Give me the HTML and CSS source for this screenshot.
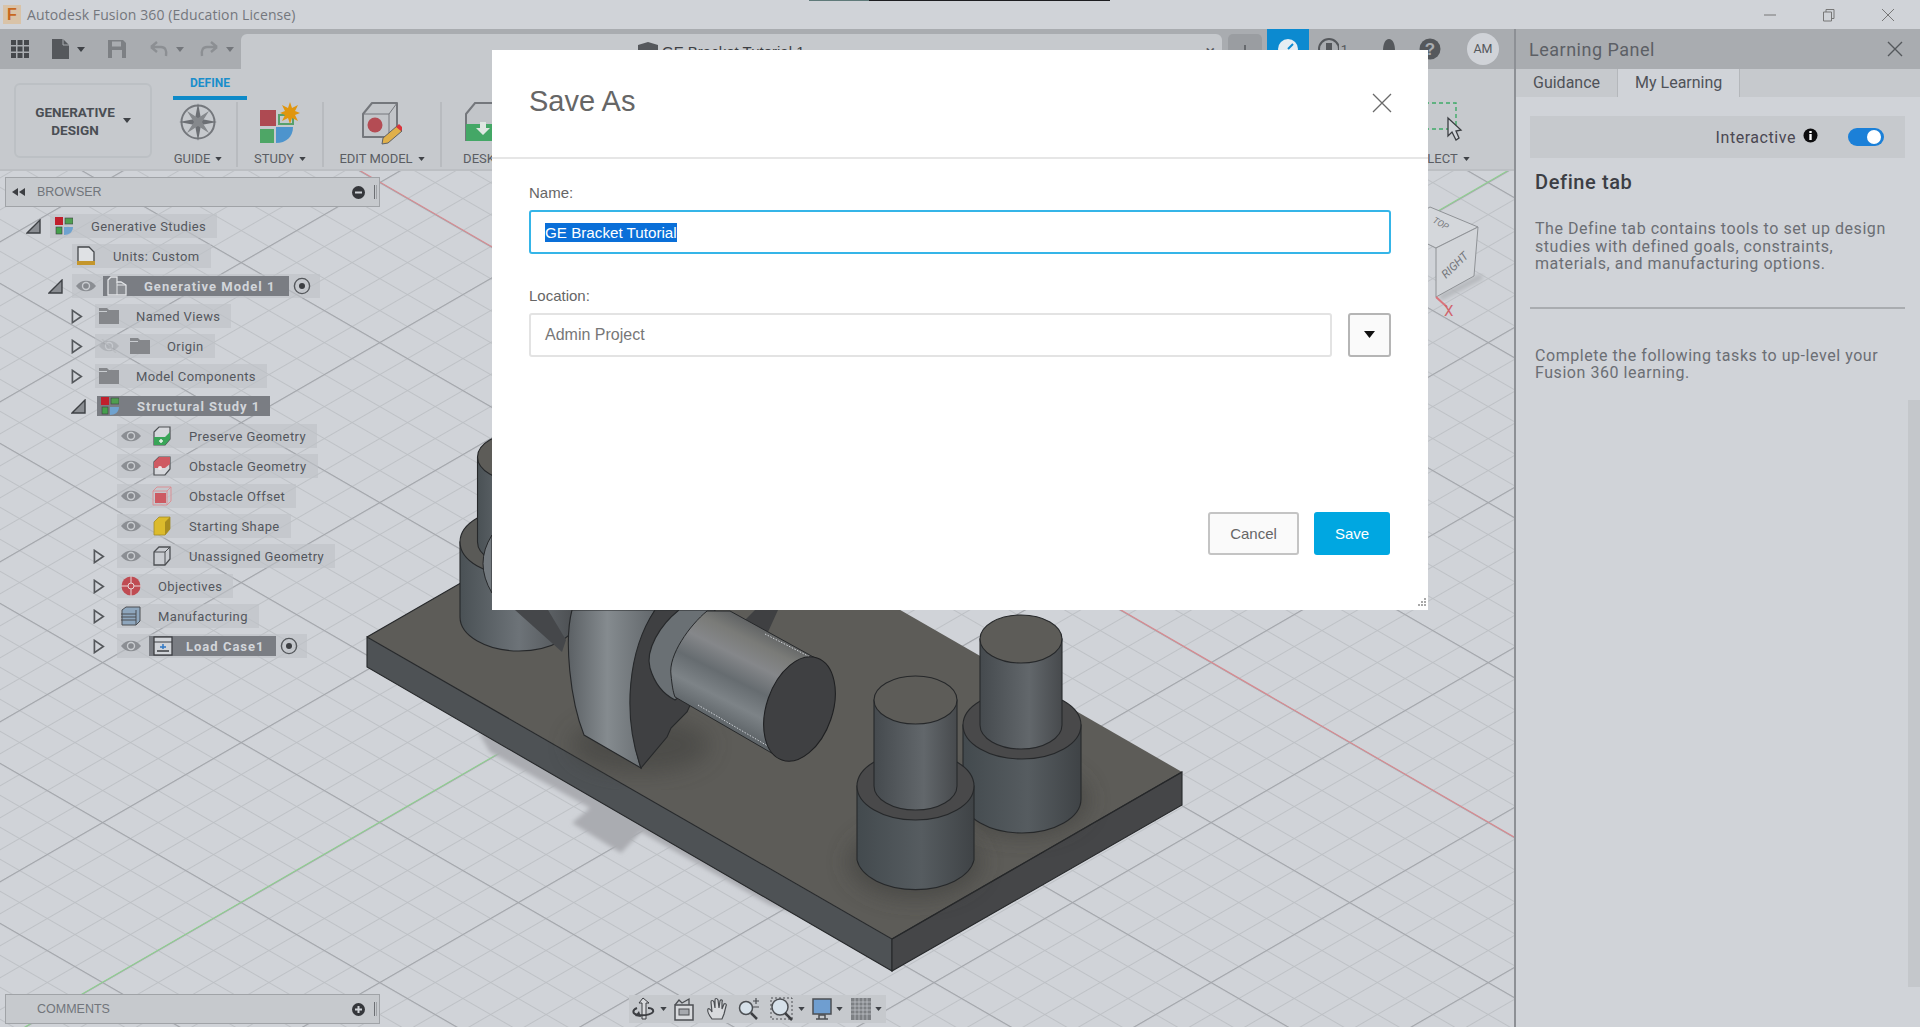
FILE: index.html
```html
<!DOCTYPE html>
<html lang="en">
<head>
  <meta charset="UTF-8" />
  <title>Autodesk Fusion 360 (Education License)</title>
  <link rel="stylesheet" href="styles.css">
</head>
<body>

  <!-- shared tree icons -->
  <svg class="sprites" width="0" height="0">
    <symbol id="eye" viewBox="0 0 20 14"><path d="M0 7C5 0 15 0 20 7C15 14 5 14 0 7Z" fill="#8b8e93"/><circle cx="10" cy="7" r="4.2" fill="#c9ccd0"/><circle cx="10" cy="7" r="2.8" fill="#85888d"/></symbol>
    <symbol id="folder" viewBox="0 0 20 16"><path d="M0 0H8L10 2H20V16H0Z" fill="#85878b"/><path d="M0 3H8V4H0Z" fill="#c9ccd0"/></symbol>
    <symbol id="twist-open" viewBox="0 0 15 15" preserveAspectRatio="xMinYMid meet"><path d="M1 14L14 1V14Z" fill="#8a8d92" stroke="#3e4145" stroke-width="1.4"/></symbol>
    <symbol id="twist-closed" viewBox="0 0 13 16" preserveAspectRatio="xMinYMid meet"><path d="M1.5 1.5L11 8L1.5 14.5Z" fill="#d0d3d8" stroke="#55585c" stroke-width="1.8"/></symbol>
    <symbol id="study" viewBox="0 0 18 18"><rect x="0" y="0" width="8" height="8" fill="#c01f2c"/><rect x="10" y="1" width="8" height="6" fill="#4f9e50" stroke="#3d3f42" stroke-width=".6"/><rect x="1" y="10" width="6" height="7" fill="#44a04c" stroke="#3d3f42" stroke-width=".6"/><path d="M9 10H18C18 15 14 18 9 18Z" fill="#6fa2cf"/></symbol>
    <symbol id="radio" viewBox="0 0 18 18"><circle cx="9" cy="9" r="7.6" fill="none" stroke="#55585c" stroke-width="1.4"/><circle cx="9" cy="9" r="3" fill="#3c3e42"/></symbol>
    <symbol id="caret" viewBox="0 0 8 5"><path d="M0 0H8L4 5Z" fill="#3f4247"/></symbol>
  </svg>

  <div class="titlebar">
    <span class="title-artifact"></span>
    <span class="app-icon">F</span>
    <span class="app-title">Autodesk Fusion 360 (Education License)</span>
    <div class="window-buttons">
      <svg width="14" height="14"><path d="M1 7H13" stroke="#777" stroke-width="1"/></svg>
      <svg width="14" height="14"><path d="M1.5 4H9.5V13H1.5ZM4 4V1.5H12V10.5H9.5" fill="none" stroke="#777" stroke-width="1"/></svg>
      <svg width="14" height="14"><path d="M1 1L13 13M13 1L1 13" stroke="#777" stroke-width="1"/></svg>
    </div>
  </div>

  <div class="workspace">
    <div class="main-column">

      <div class="qat">
        <div class="qat-left">
          <svg class="qat-grid" width="18" height="18"><g fill="#45484c"><rect width="5" height="5"/><rect x="6.5" width="5" height="5"/><rect x="13" width="5" height="5"/><rect y="6.5" width="5" height="5"/><rect x="6.5" y="6.5" width="5" height="5"/><rect x="13" y="6.5" width="5" height="5"/><rect y="13" width="5" height="5"/><rect x="6.5" y="13" width="5" height="5"/><rect x="13" y="13" width="5" height="5"/></g></svg>
          <svg class="qat-doc" width="17" height="20"><path d="M0 0H11L17 6V20H0Z" fill="#55585c"/><path d="M11 0V6H17" fill="none" stroke="#a9acb0"/></svg>
          <svg class="qat-caret" width="8" height="5"><use href="#caret"/></svg>
          <svg class="qat-save" width="18" height="18"><path d="M0 0H15L18 3V18H0Z" fill="#7d8084"/><rect x="4" y="1.5" width="9" height="5" fill="#a9acb0"/><rect x="4" y="10" width="10" height="8" fill="#a9acb0"/></svg>
          <svg class="qat-undo" width="18" height="18"><path d="M1 7L7 2M1 7L7 12M1 7H11C15 7 17 10 16 16" fill="none" stroke="#8c8f93" stroke-width="2.4"/></svg>
          <svg class="qat-caret dim" width="8" height="5"><use href="#caret"/></svg>
          <svg class="qat-redo" width="18" height="18"><path d="M17 7L11 2M17 7L11 12M17 7H7C3 7 1 10 2 16" fill="none" stroke="#8c8f93" stroke-width="2.4"/></svg>
          <svg class="qat-caret dim" width="8" height="5"><use href="#caret"/></svg>
        </div>
        <div class="doc-tab">
          <svg class="doc-icon" width="20" height="20"><path d="M0 3L10 0L20 3V20H0Z" fill="#55585c"/></svg>
          <span class="doc-name">GE Bracket Tutorial 1</span>
          <span class="doc-close">&times;</span>
        </div>
        <div class="new-tab"><svg width="14" height="14"><path d="M7 0V14M0 7H14" stroke="#66696d" stroke-width="2"/></svg></div>
        <div class="job-button"><svg width="22" height="22"><circle cx="11" cy="11" r="10" fill="#e6edf3"/><path d="M11 11L16 6" stroke="#0c8ad0" stroke-width="2"/></svg></div>
        <div class="status-icons">
          <div class="job-count"><svg width="22" height="22"><circle cx="11" cy="11" r="10" fill="none" stroke="#55585c" stroke-width="2"/><rect x="8" y="5" width="6" height="12" fill="#55585c"/></svg><span>1</span></div>
          <svg class="bell" width="16" height="20"><path d="M8 0C12 0 14 5 14 12L16 16H0L2 12C2 5 4 0 8 0Z" fill="#55585c"/></svg>
          <svg class="help" width="22" height="22"><circle cx="11" cy="11" r="10.5" fill="#55585c"/><text x="11" y="17" text-anchor="middle" font-family="Liberation Sans" font-weight="700" font-size="17" fill="#a9acb0">?</text></svg>
          <div class="avatar">AM</div>
        </div>
      </div>

      <div class="ribbon">
        <div class="mode-button"><span>GENERATIVE<br>DESIGN</span><svg width="8" height="5"><use href="#caret"/></svg></div>
        <div class="ribbon-tabbed">
          <div class="tab-strip"><span class="active-tab">DEFINE</span></div>
          <div class="tools">
            <div class="tool tool-guide">
              <svg class="tool-icon" width="40" height="44" viewBox="0 0 40 44">
                <circle cx="20" cy="20" r="16.5" fill="none" stroke="#74777c" stroke-width="2"/>
                <path d="M20 1L23 17L39 20L23 23L20 39L17 23L1 20L17 17Z" fill="#6c6f74"/>
                <path d="M9 9L20 16L31 9L24 20L31 31L20 24L9 31L16 20Z" fill="#85888c"/>
              </svg>
              <span class="tool-label">GUIDE<svg width="7" height="4"><use href="#caret"/></svg></span>
            </div>
            <div class="tool tool-study">
              <svg class="tool-icon" width="40" height="44" viewBox="0 0 40 44">
                <rect x="0" y="8" width="16" height="16" fill="#ae4a52"/>
                <rect x="19" y="13" width="14" height="9" fill="#c6c9cd" stroke="#57a06c" stroke-width="2"/>
                <rect x="0" y="27" width="14" height="14" fill="#4ea666"/>
                <path d="M16 25H33C33 35 26 41 16 41Z" fill="#4d94cd"/>
                <path d="M30 0L32 6L38 3L35 9L40 11L35 13L38 19L32 16L30 22L28 16L22 19L25 13L20 11L25 9L22 3L28 6Z" fill="#e0960e"/>
              </svg>
              <span class="tool-label">STUDY<svg width="7" height="4"><use href="#caret"/></svg></span>
            </div>
            <div class="tool tool-edit">
              <svg class="tool-icon" width="40" height="44" viewBox="0 0 40 44">
                <path d="M1 12L10 1H35V26L27 35H1Z" fill="#c2c5c9" stroke="#74777c" stroke-width="2" stroke-linejoin="round"/>
                <path d="M27 12H1M27 12L35 1M27 12V35" fill="none" stroke="#74777c" stroke-width="1"/>
                <circle cx="13" cy="23" r="7.5" fill="#b44c54"/>
                <path d="M21 36L35 24L40 29L26 41L20 42Z" fill="#e0b04a" stroke="#5e6165" stroke-width="1"/>
                <path d="M34 25L37 22L41 26L39 29Z" fill="#d8333b"/>
              </svg>
              <span class="tool-label">EDIT MODEL<svg width="7" height="4"><use href="#caret"/></svg></span>
            </div>
            <div class="tool tool-desk">
              <svg class="tool-icon" width="40" height="44" viewBox="0 0 40 44">
                <path d="M1 12L10 1H36V38H1Z" fill="#c2c5c9" stroke="#74777c" stroke-width="2"/>
                <rect x="1" y="22" width="35" height="17" fill="#44a766"/>
                <path d="M15 20H21V26H25L18 33L11 26H15Z" fill="#dfe7e2"/>
              </svg>
              <span class="tool-label">DESK<svg width="7" height="4"><use href="#caret"/></svg></span>
            </div>
          </div>
        </div>
        <div class="tool tool-select">
          <svg class="tool-icon" width="60" height="44" viewBox="0 0 60 44">
            <path d="M0 1H45V27H0" fill="none" stroke="#3faa68" stroke-width="1.4" stroke-dasharray="4 3"/>
            <path d="M37 16V34L41 30L45 38L48 36L45 29L50 28Z" fill="#d0d3d8" stroke="#3a3d41" stroke-width="1.3"/>
          </svg>
          <span class="tool-label">SELECT<svg width="7" height="4"><use href="#caret"/></svg></span>
        </div>
      </div>

      <div class="viewport">
        <svg class="scene" width="1514" height="856" viewBox="0 171 1514 856">
          <defs>
            <pattern id="gridDownMinor" width="100" height="27.71" patternUnits="userSpaceOnUse" patternTransform="translate(934 502) rotate(30)"><rect y="0" width="100" height=".9" fill="#bcbfc4"/></pattern>
            <pattern id="gridUpMinor" width="100" height="27.71" patternUnits="userSpaceOnUse" patternTransform="translate(934 502) rotate(-30)"><rect y="0" width="100" height=".9" fill="#bcbfc4"/></pattern>
            <pattern id="gridDownMajor" width="100" height="138.56" patternUnits="userSpaceOnUse" patternTransform="translate(934 502) rotate(30)"><rect y="0" width="100" height="1.1" fill="#a3a6ab"/></pattern>
            <pattern id="gridUpMajor" width="100" height="138.56" patternUnits="userSpaceOnUse" patternTransform="translate(934 502) rotate(-30)"><rect y="0" width="100" height="1.1" fill="#a3a6ab"/></pattern>
            <linearGradient id="cylBig" x1="0" x2="1" y1="0" y2="0"><stop offset="0" stop-color="#434a4e"/><stop offset=".55" stop-color="#565c60"/><stop offset="1" stop-color="#3f4346"/></linearGradient>
            <linearGradient id="cylPost" x1="0" x2="1" y1="0" y2="0"><stop offset="0" stop-color="#454a4e"/><stop offset=".6" stop-color="#62676b"/><stop offset="1" stop-color="#474a4d"/></linearGradient>
            <linearGradient id="cylBack" x1="0" x2="1" y1="0" y2="0"><stop offset="0" stop-color="#4a5155"/><stop offset=".5" stop-color="#6d7378"/><stop offset="1" stop-color="#4a4d50"/></linearGradient>
            <linearGradient id="armFill" x1="0" x2="1" y1="0" y2="0"><stop offset="0" stop-color="#5c6165"/><stop offset=".45" stop-color="#858b8f"/><stop offset="1" stop-color="#62676b"/></linearGradient>
            <linearGradient id="shaft" gradientUnits="userSpaceOnUse" x1="775" y1="625" x2="725" y2="725"><stop offset="0" stop-color="#55585b"/><stop offset=".22" stop-color="#7a7b78"/><stop offset=".4" stop-color="#85878a"/><stop offset=".6" stop-color="#666c70"/><stop offset=".8" stop-color="#7d8387"/><stop offset="1" stop-color="#5f6569"/></linearGradient>
            <filter id="soft"><feGaussianBlur stdDeviation="2"/></filter>
            <filter id="occlusion" x="-30%" y="-30%" width="160%" height="160%"><feGaussianBlur stdDeviation="11"/></filter>
          </defs>
          <rect x="0" y="171" width="1514" height="856" fill="#d0d3d8"/>
          <rect x="0" y="171" width="1514" height="856" fill="url(#gridDownMinor)"/>
          <rect x="0" y="171" width="1514" height="856" fill="url(#gridUpMinor)"/>
          <rect x="0" y="171" width="1514" height="856" fill="url(#gridDownMajor)"/>
          <rect x="0" y="171" width="1514" height="856" fill="url(#gridUpMajor)"/>
          <path d="M360 170.6L1514 837" stroke="#d98a90" stroke-width="1.1"/>
          <path d="M0 1041.4L1514 167" stroke="#8fd08f" stroke-width="1.1"/>

          <polygon points="478,732 490,752 590,808 572,823 621,853 641,832 770,905 800,915 700,800" fill="#aaacb1" filter="url(#soft)"/>

          <polygon points="367,637 657,470 1182,772 892,939" fill="#5d5c58"/>
          <polygon points="367,637 892,939 892,971 367,667" fill="#4e5255" stroke="#26282a" stroke-width="1.1"/>
          <polygon points="892,939 1182,772 1182,805 892,971" fill="#454648" stroke="#26282a" stroke-width="1.1"/>
          <path d="M367 637L657 470M892 939L1182 772" stroke="#26282a" stroke-width="1.2"/>

          <ellipse cx="915" cy="862" rx="66" ry="36" fill="#3c3c3a" opacity=".6" filter="url(#occlusion)"/>
          <ellipse cx="1022" cy="800" rx="66" ry="36" fill="#3c3c3a" opacity=".6" filter="url(#occlusion)"/>
          <ellipse cx="640" cy="745" rx="70" ry="28" fill="#3c3c3a" opacity=".5" filter="url(#occlusion)"/>

          <path d="M460 542V617A59 34 0 0 0 578 617V542Z" fill="url(#cylBack)" stroke="#26282a" stroke-width="1.1"/>
          <ellipse cx="519" cy="542" rx="59" ry="34" fill="#5a5a57" stroke="#26282a" stroke-width="1.1"/>
          <path d="M477.500 457V542A41.500 24 0 0 0 560.500 542V457Z" fill="url(#cylBack)" stroke="#26282a" stroke-width="1.1"/>
          <ellipse cx="519" cy="457" rx="41.500" ry="24" fill="#5d5c58" stroke="#26282a" stroke-width="1.1"/>
          <path d="M492 535Q474 563 492 593Z" fill="#73797e" stroke="#26282a" stroke-width="1"/>
          <polygon points="515,610 548,610 566,640 562,652" fill="#45474a"/>

          <path d="M572 610C564 640 570 700 584 735L641 768C625 720 630 650 655 610Z" fill="url(#armFill)" stroke="#26282a" stroke-width="1.1"/>
          <path d="M655 610C628 650 622 715 641 768L667 737L671 728L687 712L720 640L700 610Z" fill="#3f4042" stroke="#26282a" stroke-width="1.1"/>
          <polygon points="755,610 778,610 768,632 745,620" fill="#3f4042"/>
          <path d="M679 610C660 625 645 650 650 668C655 685 665 695 675 700L700 680L715 610Z" fill="#6a7074" stroke="#26282a" stroke-width="1.1"/>
          <path d="M707 611C690 625 668 655 671 675C672 685 673 692 675 697L782 759L817 659L730 611Z" fill="url(#shaft)" stroke="#26282a" stroke-width="1"/>
          <path d="M765 634L812 658M698 705L778 752" stroke="#d0d3d8" stroke-width="1" stroke-dasharray="1.500 1.500"/>
          <ellipse cx="799.500" cy="709" rx="33" ry="54" transform="rotate(19 799.500 709)" fill="#3f4042" stroke="#1f2022" stroke-width="1.1"/>

          <path d="M963 725V799A59 34 0 0 0 1081 799V725Z" fill="url(#cylBig)" stroke="#26282a" stroke-width="1.1"/>
          <ellipse cx="1022" cy="725" rx="59" ry="34" fill="#49494a" stroke="#26282a" stroke-width="1.1"/>
          <path d="M980 639V725A41 24 0 0 0 1062 725V639Z" fill="url(#cylPost)" stroke="#26282a" stroke-width="1.1"/>
          <ellipse cx="1021" cy="639" rx="41" ry="24" fill="#5d5c58" stroke="#26282a" stroke-width="1.1"/>

          <path d="M857 786V860A59 34 0 0 0 974 860V786Z" fill="url(#cylBig)" stroke="#26282a" stroke-width="1.1"/>
          <ellipse cx="915.500" cy="786" rx="58.500" ry="34" fill="#49494a" stroke="#26282a" stroke-width="1.1"/>
          <path d="M874 700V786A41.500 24 0 0 0 957 786V700Z" fill="url(#cylPost)" stroke="#26282a" stroke-width="1.1"/>
          <ellipse cx="915.500" cy="700" rx="41.500" ry="24" fill="#5d5c58" stroke="#26282a" stroke-width="1.1"/>

          <path d="M1440 298L1482 276" stroke="#b5b8bc" stroke-width="6" filter="url(#soft)"/>
          <polygon points="1430,207 1478,227 1436,248 1395,228" fill="#d4d7db" stroke="#8f9296"/>
          <polygon points="1436,248 1478,227 1474,276 1436,297" fill="#d2d5d9" stroke="#8f9296"/>
          <text class="cube-text" transform="translate(1432 222) rotate(30)" font-size="9">TOP</text>
          <text class="cube-text" transform="translate(1446 279) rotate(-44)" font-size="11.500">RIGHT</text>
          <path d="M1436 297L1447 307" stroke="#d9757c" stroke-width="2"/>
          <text x="1444" y="316" font-family="Roboto" font-size="15" fill="#d0656c">X</text>
        </svg>

        <div class="browser-panel">
          <div class="panel-bar">
            <svg class="rewind" width="13" height="8"><path d="M6 0V8L0 4ZM13 0V8L7 4Z" fill="#3c3e42"/></svg>
            <span class="panel-title">BROWSER</span>
            <svg class="round-btn" width="13" height="13"><circle cx="6.500" cy="6.500" r="6.500" fill="#35373b"/><rect x="3" y="5.500" width="7" height="2" fill="#d0d3d8"/></svg>
            <span class="grip"></span>
          </div>
        </div>

        <div class="tree">
          <div class="tree-row depth-0">
            <svg class="twist"><use href="#twist-open"/></svg>
            <div class="node"><svg class="node-icon"><use href="#study" x="1" y="1" width="18" height="18"/></svg><span class="node-text">Generative Studies</span></div>
          </div>
          <div class="tree-row depth-1">
            <span class="twist"></span>
            <div class="node">
              <svg class="node-icon" viewBox="0 0 20 20"><path d="M2 1H13L18 6V16H2Z" fill="#dfe1e4" stroke="#44474b" stroke-width="1.3"/><rect x="1" y="15" width="18" height="4" fill="#c4962c"/></svg>
              <span class="node-text">Units: Custom</span>
            </div>
          </div>
          <div class="tree-row depth-1">
            <svg class="twist"><use href="#twist-open"/></svg>
            <div class="node has-radio">
              <svg class="eye"><use href="#eye"/></svg>
              <div class="selected sel-model">
                <svg class="node-icon" viewBox="0 0 20 20"><path d="M1 4L4 1H10V6H14L19 9V19H1Z" fill="#8a8d92" stroke="#e2e4e7" stroke-width="1.3"/><path d="M10 6V19M10 9H19" stroke="#e2e4e7"/></svg>
                <span class="node-text">Generative Model 1</span>
              </div>
              <svg class="radio"><use href="#radio"/></svg>
            </div>
          </div>
          <div class="tree-row depth-2">
            <svg class="twist"><use href="#twist-closed"/></svg>
            <div class="node"><svg class="node-icon"><use href="#folder"/></svg><span class="node-text">Named Views</span></div>
          </div>
          <div class="tree-row depth-2">
            <svg class="twist"><use href="#twist-closed"/></svg>
            <div class="node">
              <svg class="eye off" viewBox="0 0 20 14"><use href="#eye"/><path d="M3 0L17 14" stroke="#a9acb0" stroke-width="1.500"/></svg>
              <svg class="node-icon"><use href="#folder"/></svg><span class="node-text">Origin</span>
            </div>
          </div>
          <div class="tree-row depth-2">
            <svg class="twist"><use href="#twist-closed"/></svg>
            <div class="node"><svg class="node-icon"><use href="#folder"/></svg><span class="node-text">Model Components</span></div>
          </div>
          <div class="tree-row depth-2">
            <svg class="twist"><use href="#twist-open"/></svg>
            <div class="node node-bare">
              <div class="selected sel-study"><svg class="node-icon"><use href="#study" x="1" y="1" width="18" height="18"/></svg><span class="node-text">Structural Study 1</span></div>
            </div>
          </div>
          <div class="tree-row depth-3">
            <span class="twist"></span>
            <div class="node wide">
              <svg class="eye"><use href="#eye"/></svg>
              <svg class="node-icon" viewBox="0 0 20 20"><path d="M2 6L7 1H18V13L13 19H2Z" fill="#d6d8dc" stroke="#4c4f53" stroke-width="1.2"/><path d="M2 11H13L18 6V13L13 19H2Z" fill="#39a558"/><path d="M7 15H11M9 13V17" stroke="#e8f3ea" stroke-width="1.500"/></svg>
              <span class="node-text">Preserve Geometry</span>
            </div>
          </div>
          <div class="tree-row depth-3">
            <span class="twist"></span>
            <div class="node wide">
              <svg class="eye"><use href="#eye"/></svg>
              <svg class="node-icon" viewBox="0 0 20 20"><path d="M2 6L7 1H18V13L13 19H2Z" fill="#d6d8dc" stroke="#4c4f53" stroke-width="1.2"/><path d="M2 6L7 1H18L18 8L13 12H2Z" fill="#cf5a62"/><circle cx="8" cy="12" r="2" fill="#f0e2e3"/></svg>
              <span class="node-text">Obstacle Geometry</span>
            </div>
          </div>
          <div class="tree-row depth-3">
            <span class="twist"></span>
            <div class="node">
              <svg class="eye"><use href="#eye"/></svg>
              <svg class="node-icon" viewBox="0 0 20 20"><path d="M1 5L5 1H19V15L15 19H1ZM1 5H15V19M15 5L19 1" fill="none" stroke="#dc8a90" stroke-width=".9"/><rect x="3" y="7" width="11" height="10" fill="#cc5a62"/></svg>
              <span class="node-text">Obstacle Offset</span>
            </div>
          </div>
          <div class="tree-row depth-3">
            <span class="twist"></span>
            <div class="node">
              <svg class="eye"><use href="#eye"/></svg>
              <svg class="node-icon" viewBox="0 0 20 20"><path d="M2 6L7 1H18V13L13 19H2Z" fill="#dcbb2c" stroke="#a18a2a" stroke-width=".8"/><path d="M13 6L18 1V13L13 19Z" fill="#a88c1f"/></svg>
              <span class="node-text">Starting Shape</span>
            </div>
          </div>
          <div class="tree-row depth-3">
            <svg class="twist"><use href="#twist-closed"/></svg>
            <div class="node wide">
              <svg class="eye"><use href="#eye"/></svg>
              <svg class="node-icon" viewBox="0 0 20 20"><path d="M2 6L7 1H18V13L13 19H2Z" fill="#c9ccd1" stroke="#4c4f53" stroke-width="1.300"/><path d="M2 6H13L18 1M13 6V19" fill="none" stroke="#4c4f53"/></svg>
              <span class="node-text">Unassigned Geometry</span>
            </div>
          </div>
          <div class="tree-row depth-3">
            <svg class="twist"><use href="#twist-closed"/></svg>
            <div class="node">
              <svg class="node-icon" viewBox="0 0 20 20"><circle cx="10" cy="10" r="9.500" fill="#bf4b52"/><circle cx="10" cy="10" r="3" fill="#bf4b52" stroke="#e7d8d9"/><path d="M0 10H7M13 10H20M10 0V7M10 13V20" stroke="#e7d8d9"/></svg>
              <span class="node-text">Objectives</span>
            </div>
          </div>
          <div class="tree-row depth-3">
            <svg class="twist"><use href="#twist-closed"/></svg>
            <div class="node">
              <svg class="node-icon" viewBox="0 0 20 20"><path d="M1 4L5 1H19V15L15 19H1Z" fill="#8ea6bd" stroke="#4c4f53"/><path d="M0 8H15M0 11H15M0 14H15" stroke="#4c4f53"/><path d="M15 4V19" stroke="#4c4f53"/></svg>
              <span class="node-text">Manufacturing</span>
            </div>
          </div>
          <div class="tree-row depth-3">
            <svg class="twist"><use href="#twist-closed"/></svg>
            <div class="node has-radio">
              <svg class="eye"><use href="#eye"/></svg>
              <div class="selected sel-load">
                <svg class="node-icon" viewBox="0 0 20 20"><rect x="1" y="1" width="18" height="18" fill="#d0d3d8" stroke="#3c3e42" stroke-width="1.300"/><path d="M1 6H19" stroke="#3c3e42"/><path d="M10 8V13M7 11H13" stroke="#2f77c4" stroke-width="1.500"/><path d="M4 15H16" stroke="#3c3e42" stroke-width="1.500"/></svg>
                <span class="node-text">Load Case1</span>
              </div>
              <svg class="radio"><use href="#radio"/></svg>
            </div>
          </div>
        </div>

        <div class="viewport-footer">
          <div class="comments-panel">
            <div class="panel-bar">
              <span class="panel-title no-rewind">COMMENTS</span>
              <svg class="round-btn" width="13" height="13"><circle cx="6.500" cy="6.500" r="6.500" fill="#35373b"/><path d="M3 6.500H10M6.500 3V10" stroke="#d0d3d8" stroke-width="2"/></svg>
              <span class="grip"></span>
            </div>
          </div>
          <div class="nav-bar">
            <svg width="24" height="24" viewBox="0 0 24 24"><path d="M11 1L7 6H10V22H14V6H17Z" fill="#d8dadd" stroke="#3c3e42"/><path d="M5 11C0 13 0 17 6 18C13 19 23 17 21 13C20 11 18 11 16 11" fill="none" stroke="#3c3e42" stroke-width="2"/><path d="M7 14L3 19L9 20Z" fill="#3c3e42"/></svg>
            <svg class="nav-caret" width="7" height="4"><use href="#caret"/></svg>
            <svg class="nav-look" width="22" height="24" viewBox="0 0 22 24"><path d="M2 8H20V23H2Z" fill="#d8dadd" stroke="#4c4f53" stroke-width="1.500"/><path d="M2 8L6 3L9 6L16 2V8" fill="none" stroke="#4c4f53" stroke-width="1.300"/><rect x="6" y="12" width="10" height="6" fill="#a6a9ae" stroke="#4c4f53"/></svg>
            <svg class="nav-hand" width="22" height="24" viewBox="0 0 22 24"><path d="M6 22C3 18 1 14 2 12C3 11 5 13 6 15L5 5C5 3 7 3 8 5L9 11L9 3C9 1 11 1 12 3L13 11L14 4C15 2 17 3 16 5L16 12L18 7C19 6 21 7 20 9L18 17L16 22Z" fill="#d8dadd" stroke="#4c4f53" stroke-width="1.200"/></svg>
            <svg class="nav-zoom" width="22" height="24" viewBox="0 0 22 24"><circle cx="8" cy="11" r="6.500" fill="#d6e1ea" stroke="#4c4f53" stroke-width="1.500"/><path d="M13 16L19 22" stroke="#3c3e42" stroke-width="2.500"/><path d="M15 4H21M18 1V7M15 10H21" stroke="#4c4f53" stroke-width="1.200"/></svg>
            <svg class="nav-fit" width="24" height="24" viewBox="0 0 24 24"><rect x="1" y="1" width="21" height="21" fill="none" stroke="#4c4f53" stroke-dasharray="2 2"/><circle cx="10" cy="10" r="8" fill="#d6e1ea" stroke="#4c4f53" stroke-width="1.500"/><path d="M15 16L22 23" stroke="#3c3e42" stroke-width="2.500"/></svg>
            <svg class="nav-caret" width="7" height="4"><use href="#caret"/></svg>
            <svg class="nav-display" width="20" height="24" viewBox="0 0 20 24"><rect x="1" y="2" width="18" height="15" fill="#6f9ed0" stroke="#4c4f53" stroke-width="1.500"/><path d="M7 18H13V22H7ZM4 22H16" fill="none" stroke="#4c4f53" stroke-width="1.500"/></svg>
            <svg class="nav-caret" width="7" height="4"><use href="#caret"/></svg>
            <svg class="nav-grid" width="20" height="22" viewBox="0 0 20 22"><rect width="20" height="22" fill="#7d8084"/><path d="M4 0V22M8 0V22M12 0V22M16 0V22M0 4H20M0 8H20M0 12H20M0 16H20" stroke="#c6c9cd" stroke-width=".7"/></svg>
            <svg class="nav-caret" width="7" height="4"><use href="#caret"/></svg>
          </div>
        </div>
      </div>
    </div>

    <aside class="learning-panel">
      <div class="learning-header">
        <span>Learning Panel</span>
        <svg width="16" height="16"><path d="M1 1L15 15M15 1L1 15" stroke="#55585c" stroke-width="1.400"/></svg>
      </div>
      <div class="learning-tabs">
        <span class="learning-tab">Guidance</span>
        <span class="learning-tab current">My Learning</span>
      </div>
      <div class="learning-body">
        <div class="interactive-bar">
          <span>Interactive</span>
          <svg class="info" width="15" height="15"><circle cx="7.500" cy="7.500" r="7" fill="#0d0d0f"/><rect x="6.300" y="6" width="2.400" height="6" fill="#fff"/><rect x="6.300" y="3" width="2.400" height="2" fill="#fff"/></svg>
          <span class="toggle"><i></i></span>
        </div>
        <h2>Define tab</h2>
        <p class="lesson-text">The Define tab contains tools to set up design studies with defined goals, constraints, materials, and manufacturing options.</p>
        <hr class="lesson-rule">
        <p class="lesson-text">Complete the following tasks to up-level your Fusion 360 learning.</p>
      </div>
      <div class="panel-scrollbar"></div>
    </aside>
  </div>

  <div class="dialog">
    <div class="dialog-header">
      <h1>Save As</h1>
      <svg width="20" height="20"><path d="M1 1L19 19M19 1L1 19" stroke="#6a6a6a" stroke-width="1.300"/></svg>
    </div>
    <div class="dialog-body">
      <div class="field-label first">Name:</div>
      <div class="text-field focused"><span class="selection">GE Bracket Tutorial</span></div>
      <div class="field-label">Location:</div>
      <div class="location-row">
        <div class="text-field location-value">Admin Project</div>
        <div class="drop-button"><svg width="11" height="7"><path d="M0 0H11L5.500 7Z" fill="#111"/></svg></div>
      </div>
    </div>
    <div class="dialog-footer">
      <button class="btn btn-cancel">Cancel</button>
      <button class="btn btn-save">Save</button>
    </div>
    <svg class="resize-grip" width="8" height="8"><g fill="#a9a9a9"><rect x="6" y="0" width="2" height="2"/><rect x="3" y="3" width="2" height="2"/><rect x="6" y="3" width="2" height="2"/><rect x="0" y="6" width="2" height="2"/><rect x="3" y="6" width="2" height="2"/><rect x="6" y="6" width="2" height="2"/></g></svg>
  </div>

</body>
</html>
```

FILE: styles.css
```css
* {
  box-sizing: border-box;
}

html, body {
  margin: 0;
  height: 100%;
}

body {
  position: relative;
  width: 1920px;
  height: 1027px;
  overflow: hidden;
  display: flex;
  flex-direction: column;
  background-color: #d0d3d8;
  font-family: 'Roboto', sans-serif;
  color: #55585c;
}

.sprites {
  position: absolute;
}

/* title bar */
.titlebar {
  position: relative;
  height: 29px;
  flex: none;
  display: flex;
  align-items: center;
  padding-left: 3px;
  background-color: #d0d3d8;
}

.title-artifact {
  position: absolute;
  left: 809px;
  top: 0;
  width: 301px;
  height: 1px;
  background: linear-gradient(to right, #5f7a7a 20%, #1c1d20 20%);
}

.app-icon {
  width: 18px;
  height: 19px;
  background-color: #d9c3a8;
  color: #c8681e;
  font: 700 16px/19px 'Liberation Sans', sans-serif;
  text-align: center;
}

.app-title {
  margin-left: 6px;
  font: 14px 'Open Sans', sans-serif;
  letter-spacing: 0.1px;
  color: #74777d;
}

.window-buttons {
  margin-left: auto;
  margin-right: 25px;
  display: flex;
  gap: 45px;
}

/* main layout */
.workspace {
  flex: 1;
  display: flex;
  min-height: 0;
}

.main-column {
  width: 1514px;
  flex: none;
  display: flex;
  flex-direction: column;
}

/* quick access row */
.qat {
  height: 40px;
  flex: none;
  display: flex;
  background-color: #a9acb0;
}

.qat-left {
  width: 241px;
  flex: none;
  display: flex;
  align-items: center;
  padding-left: 11px;
}

.qat-left svg {
  flex: none;
}

.qat-doc { margin-left: 23px; }
.qat-caret { margin-left: 8px; }
.qat-caret.dim { opacity: 0.5; margin-left: 8px; }
.qat-save { margin-left: 23px; }
.qat-undo { margin-left: 24px; }
.qat-redo { margin-left: 16px; }

.doc-tab {
  width: 981px;
  flex: none;
  margin-top: 5px;
  display: flex;
  align-items: center;
  padding-left: 397px;
  background-color: #c6c9cd;
  border-radius: 6px 6px 0 0;
}

.doc-name {
  margin-left: 4px;
  font: 15px 'Liberation Sans', sans-serif;
  color: #3c3e42;
}

.doc-close {
  margin-left: auto;
  margin-right: 7px;
  font-size: 18px;
}

.new-tab {
  width: 34px;
  margin: 5px 0 0 6px;
  flex: none;
  display: flex;
  align-items: center;
  justify-content: center;
  background-color: #9a9da1;
  border-radius: 5px 5px 0 0;
}

.job-button {
  width: 42px;
  margin-left: 5px;
  flex: none;
  display: flex;
  align-items: center;
  justify-content: center;
  background-color: #0c8ad0;
}

.status-icons {
  flex: 1;
  display: flex;
  align-items: center;
  padding-left: 9px;
}

.job-count {
  display: flex;
  align-items: center;
  gap: 2px;
  width: 30px;
  font-size: 13px;
}

.bell { margin-left: 33px; }
.help { margin-left: 22px; }

.avatar {
  width: 32px;
  height: 32px;
  margin-left: 26px;
  border-radius: 50%;
  background-color: #d0d3d8;
  text-align: center;
  font-size: 12.5px;
  line-height: 32px;
}

/* ribbon */
.ribbon {
  height: 102px;
  flex: none;
  display: flex;
  padding: 0 43px 0 14px;
  background-color: #c6c9cd;
  border-bottom: 2px solid #bcbfc3;
}

.mode-button {
  width: 138px;
  height: 75px;
  margin-top: 14px;
  flex: none;
  display: flex;
  align-items: center;
  justify-content: center;
  gap: 8px;
  border: 2px solid #bcc0c4;
  border-radius: 6px;
  font-size: 13.5px;
  font-weight: 700;
  line-height: 18px;
  text-align: center;
  color: #4a4e54;
}

.ribbon-tabbed {
  margin-left: 14px;
}

.tab-strip {
  height: 31px;
  padding-left: 7px;
}

.active-tab {
  display: block;
  width: 74px;
  height: 31px;
  padding-top: 7px;
  border-bottom: 4px solid #0e8ac8;
  text-align: center;
  font-size: 12px;
  font-weight: 700;
  color: #1a8ecb;
}

.tools {
  display: flex;
  margin-top: 2px;
}

.tool {
  height: 65px;
  display: flex;
  flex-direction: column;
  align-items: center;
  justify-content: space-between;
  border-right: 2px solid #b8bbbf;
}

.tool-guide { width: 72px; padding-right: 6px; }
.tool-study { width: 86px; }
.tool-edit { width: 118px; }
.tool-desk { width: 86px; border-right: none; }

.tool-select {
  width: 60px;
  margin: 33px 0 0 auto;
  border-right: none;
}

.tool-icon {
  flex: none;
}

.tool-label {
  display: flex;
  align-items: center;
  gap: 5px;
  font-size: 13px;
  line-height: 16px;
  white-space: nowrap;
  color: #5a5d63;
}

/* viewport */
.viewport {
  position: relative;
  flex: 1;
  display: flex;
  flex-direction: column;
  padding: 6px 0 3px 5px;
  overflow: hidden;
}

.scene {
  position: absolute;
  left: 0;
  top: 0;
}

.cube-text {
  font-family: 'Roboto', sans-serif;
  font-style: italic;
  fill: #74777c;
}

.browser-panel,
.comments-panel,
.tree,
.viewport-footer {
  position: relative;
}

.browser-panel,
.comments-panel {
  width: 375px;
  flex: none;
}

.panel-bar {
  height: 30px;
  display: flex;
  align-items: center;
  padding-left: 6px;
  background-color: #c6c9cd;
  border: 1px solid #a0a3a7;
}

.rewind {
  flex: none;
}

.panel-title {
  margin-left: 12px;
  font: 12.5px 'Liberation Sans', sans-serif;
  color: #71757b;
}

.panel-title.no-rewind {
  margin-left: 25px;
}

.round-btn {
  margin-left: auto;
}

.grip {
  width: 3px;
  height: 14px;
  margin: 0 2px 0 9px;
  border-left: 1px solid #6c6f73;
  border-right: 1px solid #a0a3a7;
}

/* browser tree */
.tree {
  margin-top: 7px;
  display: flex;
  flex-direction: column;
  gap: 6px;
}

.tree-row {
  display: flex;
  align-items: center;
  height: 24px;
}

.depth-0 { margin-left: 21px; }
.depth-1 { margin-left: 43px; }
.depth-2 { margin-left: 66px; }
.depth-3 { margin-left: 88px; }

.twist {
  width: 24px;
  height: 15px;
  flex: none;
  display: block;
}

.node {
  height: 24px;
  display: flex;
  align-items: center;
  padding: 0 11px 0 4px;
  background-color: rgba(190, 194, 199, 0.6);
}

.node-bare {
  padding: 0 0 0 2px;
  background: none;
}

.node-icon {
  width: 20px;
  height: 20px;
  flex: none;
}

.node-text {
  margin-left: 17px;
  font: 13px 'Roboto', sans-serif;
  letter-spacing: 0.4px;
  white-space: nowrap;
  color: #54575d;
}

.eye {
  width: 20px;
  height: 14px;
  flex: none;
  margin-right: 11px;
}

.eye.off {
  opacity: 0.35;
}

.selected {
  height: 20px;
  display: flex;
  align-items: center;
  background-color: #7a7d83;
}

.selected .node-text {
  font-weight: 700;
  letter-spacing: 1px;
  color: #d2d5da;
}

.sel-model {
  margin-left: -4px;
  padding: 0 14px 0 4px;
}

.sel-study {
  padding: 0 10px 0 3px;
}

.sel-load {
  margin-left: -3px;
  padding: 0 11px 0 4px;
}

.sel-load .node-text {
  margin-left: 13px;
}

.radio {
  width: 18px;
  height: 18px;
  flex: none;
  margin-left: 4px;
}

.has-radio {
  padding-right: 9px;
}

/* bottom of viewport */
.viewport-footer {
  margin-top: auto;
  display: flex;
  align-items: center;
}

.nav-bar {
  height: 28px;
  margin-left: 249px;
  display: flex;
  align-items: center;
  padding: 0 4px 0 3px;
  background-color: #c6c9cd;
}

.nav-bar svg {
  flex: none;
}

.nav-caret { margin-left: 4px; }
.nav-look { margin-left: 6px; }
.nav-hand { margin-left: 11px; }
.nav-zoom { margin-left: 10px; }
.nav-fit { margin-left: 10px; }
.nav-display { margin-left: 7px; }
.nav-grid { margin-left: 8px; }

/* learning panel */
.learning-panel {
  position: relative;
  flex: 1;
  display: flex;
  flex-direction: column;
  border-left: 2px solid #8d9095;
  background-color: #d0d3d8;
}

.learning-header {
  height: 40px;
  flex: none;
  display: flex;
  align-items: center;
  justify-content: space-between;
  padding: 0 17px 0 13px;
  background-color: #a9acb0;
  font-size: 18px;
  letter-spacing: 0.5px;
  color: #5c5f65;
}

.learning-tabs {
  height: 28px;
  flex: none;
  display: flex;
  background-color: #c6c9cd;
}

.learning-tab {
  padding: 0 17px;
  font-size: 16px;
  line-height: 28px;
  color: #4f5258;
}

.learning-tab.current {
  background-color: #d0d3d8;
  border-left: 1px solid #b4b7bb;
  border-right: 1px solid #b4b7bb;
  margin-left: 0;
}

.learning-body {
  padding: 19px 15px 0 14px;
}

.interactive-bar {
  height: 42px;
  display: flex;
  align-items: center;
  justify-content: flex-end;
  padding-right: 21px;
  background-color: #c6c9cd;
  font-size: 16px;
  letter-spacing: 0.55px;
  color: #4a4752;
}

.info {
  margin-left: 7px;
  margin-bottom: 3px;
}

.toggle {
  width: 36px;
  height: 18px;
  margin-left: 30px;
  padding: 2px 3px 2px 0;
  display: flex;
  justify-content: flex-end;
  border-radius: 9px;
  background-color: #1b80d8;
}

.toggle i {
  width: 14px;
  height: 14px;
  border-radius: 50%;
  background-color: #fff;
}

.learning-body h2 {
  margin: 12px 0 0 5px;
  font-size: 20px;
  font-weight: 500;
  letter-spacing: 0.6px;
  line-height: 24px;
  color: #3c3e44;
}

.lesson-text {
  margin: 0 0 0 5px;
  font-size: 16px;
  letter-spacing: 0.55px;
  line-height: 17.5px;
  color: #6b6e74;
}

.learning-body h2 + .lesson-text {
  margin-top: 26px;
}

.lesson-rule {
  margin: 34px 0 38px;
  border: none;
  border-top: 2px solid #a9acb0;
}

.panel-scrollbar {
  position: absolute;
  right: 0;
  top: 371px;
  width: 12px;
  height: 587px;
  background-color: #c4c7cb;
}

/* save dialog */
.dialog {
  position: absolute;
  left: 492px;
  top: 50px;
  width: 936px;
  height: 560px;
  display: flex;
  flex-direction: column;
  background-color: #fff;
  font-family: 'Liberation Sans', sans-serif;
  color: #666;
}

.dialog-header {
  height: 109px;
  flex: none;
  display: flex;
  align-items: center;
  justify-content: space-between;
  padding: 0 36px 1px 37px;
  border-bottom: 2px solid #e6e6e6;
}

.dialog-header h1 {
  margin: 0 0 4px;
  font-size: 29px;
  font-weight: 400;
  color: #666;
}

.dialog-body {
  padding: 0 37px;
}

.field-label {
  margin-top: 32px;
  margin-bottom: 7px;
  font-size: 15px;
  line-height: 20px;
}

.field-label.first {
  margin-top: 24px;
}

.text-field {
  height: 44px;
  padding: 0 14px;
  display: flex;
  align-items: center;
  flex: 1;
  border: 2px solid #e3e3e3;
  border-radius: 3px;
  font-size: 15.2px;
  color: #777;
}

.text-field.focused {
  border-color: #35b5e8;
}

.location-value {
  font-size: 16px;
}

.selection {
  background-color: #0a6fd8;
  color: #fff;
  line-height: 19px;
}

.location-row {
  display: flex;
  gap: 16px;
}

.drop-button {
  width: 43px;
  height: 44px;
  flex: none;
  display: flex;
  align-items: center;
  justify-content: center;
  padding-bottom: 2px;
  background-color: #fafafa;
  border: 2px solid #b5b5b5;
  border-radius: 3px;
}

.dialog-footer {
  margin-top: auto;
  display: flex;
  justify-content: flex-end;
  gap: 15px;
  padding: 0 38px 55px 0;
}

.btn {
  height: 43px;
  font: 15px 'Liberation Sans', sans-serif;
  border-radius: 3px;
}

.btn-cancel {
  width: 91px;
  background-color: #fafafa;
  border: 2px solid #c4c4c4;
  color: #666;
}

.btn-save {
  width: 76px;
  background-color: #00a7e1;
  border: none;
  color: #fff;
}

.resize-grip {
  position: absolute;
  right: 2px;
  bottom: 4px;
}
```
